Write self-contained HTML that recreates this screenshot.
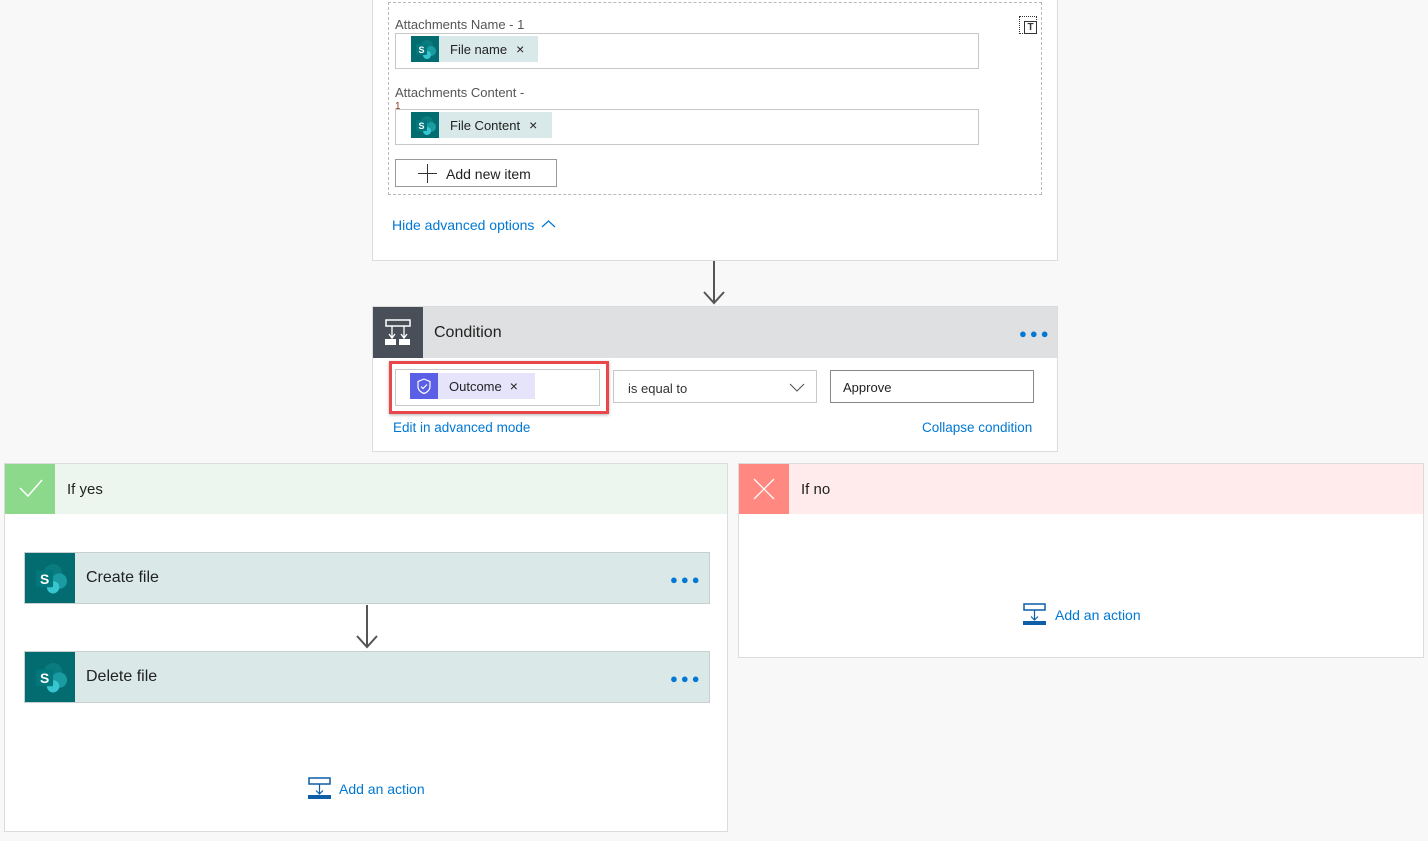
<!DOCTYPE html>
<html><head><meta charset="utf-8"><style>
*{box-sizing:border-box;margin:0;padding:0}
body{width:1428px;height:841px;background:#f8f8f8;position:relative;overflow:hidden;font-family:"Segoe UI","Liberation Sans",sans-serif;color:#333}
.a{position:absolute}
.card{background:#fff;border:1px solid #dcdcdc}
.lbl{font-size:13px;color:#555}
.inp{background:#fff;border:1px solid #c8c8c8}
.tok{background:#d9e8e8;font-size:13px;color:#222;display:flex;align-items:center}
.sp{background:#036c70;display:flex;align-items:center;justify-content:center}
.link{color:#0078d4;font-size:14px}
.dots{color:#0078d4;font-size:13px;letter-spacing:3px;line-height:10px}
</style></head><body>
<svg width="0" height="0" style="position:absolute"><defs>
<g id="spi"><circle cx="13" cy="8" r="6" fill="#0a7c80"/><circle cx="17" cy="13" r="5" fill="#1a9ba1"/><circle cx="13" cy="17" r="4" fill="#37c6d0"/><rect x="2" y="6" width="11" height="11" rx="1" fill="#03787c"/><text x="7.5" y="15" font-size="9" font-weight="bold" fill="#fff" text-anchor="middle" font-family="Liberation Sans">S</text></g>
<g id="add"><rect x="1" y="1" width="21" height="6" fill="#fff" stroke="#0f5fa8" stroke-width="1.5"/><line x1="11.5" y1="7" x2="11.5" y2="17" stroke="#0f5fa8" stroke-width="1.2"/><path d="M8 13.5l3.5 3.5 3.5-3.5" fill="none" stroke="#0f5fa8" stroke-width="1.2"/><rect x="0" y="18" width="23" height="4" fill="#0f5fa8"/></g>
</defs></svg>

<div class="a card" style="left:372px;top:-2px;width:686px;height:263px"></div>
<div class="a" style="left:388px;top:2px;width:654px;height:193px;border:1px dashed #b8b8b8"></div>
<div class="a" style="left:1019px;top:16px;width:18px;height:18px;border:1px dotted #333"></div>
<div class="a" style="left:1024px;top:21px;width:13px;height:13px;border:1px solid #333;font-size:10px;font-weight:bold;text-align:center;line-height:11px;background:#fff">T</div>
<div class="a lbl" style="left:395px;top:17px">Attachments Name - 1</div>
<div class="a inp" style="left:395px;top:33px;width:584px;height:36px"></div>
<div class="a tok" style="left:411px;top:36px;width:127px;height:26px"><div class="sp" style="width:28px;height:26px"><svg width="22" height="22"><use href="#spi"/></svg></div><span style="margin-left:11px">File name</span><span style="margin-left:9px;font-size:14px">×</span></div>
<div class="a lbl" style="left:395px;top:85px">Attachments Content -</div>
<div class="a" style="left:395px;top:101px;font-size:10px;color:#8a3b1f">1</div>
<div class="a inp" style="left:395px;top:109px;width:584px;height:36px"></div>
<div class="a tok" style="left:411px;top:112px;width:141px;height:26px"><div class="sp" style="width:28px;height:26px"><svg width="22" height="22"><use href="#spi"/></svg></div><span style="margin-left:11px">File Content</span><span style="margin-left:9px;font-size:14px">×</span></div>
<div class="a" style="left:395px;top:159px;width:162px;height:28px;border:1px solid #999;background:#fff;font-size:14px;color:#222;line-height:28px;padding-left:50px">Add new item</div>
<div class="a" style="left:418px;top:173px;width:19px;height:1px;background:#333"></div>
<div class="a" style="left:427px;top:164px;width:1px;height:19px;background:#333"></div>
<div class="a link" style="left:392px;top:217px">Hide advanced options</div>
<svg class="a" style="left:541px;top:219px" width="15" height="10"><path d="M1 8l6.5-6 6.5 6" fill="none" stroke="#0078d4" stroke-width="1.2"/></svg>

<div class="a" style="left:713px;top:261px;width:2px;height:42px;background:#555"></div>
<svg class="a" style="left:703px;top:288px" width="22" height="17"><path d="M1 4l10 11 10-11" fill="none" stroke="#555" stroke-width="2"/></svg>

<div class="a card" style="left:372px;top:306px;width:686px;height:146px"></div>
<div class="a" style="left:373px;top:307px;width:684px;height:51px;background:#dfe0e1"></div>
<div class="a" style="left:373px;top:307px;width:50px;height:51px;background:#484f58"></div>
<svg class="a" style="left:384px;top:318px" width="28" height="28"><rect x="2" y="2" width="24" height="6" fill="none" stroke="#fff" stroke-width="1.5"/><path d="M8 8v12M20 8v12M5 16l3 4 3-4M17 16l3 4 3-4" fill="none" stroke="#fff" stroke-width="1.3"/><rect x="1" y="21" width="11" height="6" fill="#fff"/><rect x="15" y="21" width="11" height="6" fill="#fff"/></svg>
<div class="a" style="left:434px;top:324px;font-size:16px;color:#222">Condition</div>
<div class="a dots" style="left:1019px;top:329px">●●●</div>
<div class="a" style="left:389px;top:361px;width:220px;height:53px;border:3px solid #e8484b;box-shadow:0 1px 3px rgba(0,0,0,.3)"></div>
<div class="a inp" style="left:395px;top:369px;width:205px;height:37px"></div>
<div class="a tok" style="left:410px;top:373px;width:125px;height:26px;background:#e5e4fb"><div style="width:28px;height:26px;background:#5b5fe5;display:flex;align-items:center;justify-content:center"><svg width="18" height="18"><path d="M9 2l6 2.5v5c0 3.5-3 6-6 7-3-1-6-3.5-6-7v-5z" fill="none" stroke="#fff" stroke-width="1.2"/><path d="M6 9.5l2 2 4-4" fill="none" stroke="#fff" stroke-width="1.2"/></svg></div><span style="margin-left:11px">Outcome</span><span style="margin-left:8px;font-size:14px">×</span></div>
<div class="a inp" style="left:613px;top:370px;width:204px;height:33px;font-size:13px;line-height:35px;padding-left:14px;color:#333">is equal to</div>
<svg class="a" style="left:789px;top:383px" width="16" height="10"><path d="M1 1l7 7 7-7" fill="none" stroke="#555" stroke-width="1.1"/></svg>
<div class="a" style="left:830px;top:370px;width:204px;height:33px;border:1px solid #888;background:#fff;font-size:13px;line-height:33px;padding-left:12px;color:#222">Approve</div>
<div class="a link" style="left:393px;top:420px;font-size:13.5px">Edit in advanced mode</div>
<div class="a link" style="left:922px;top:420px;font-size:13.5px">Collapse condition</div>

<div class="a card" style="left:4px;top:463px;width:724px;height:369px"></div>
<div class="a" style="left:5px;top:464px;width:722px;height:50px;background:#ecf6ee"></div>
<div class="a" style="left:5px;top:464px;width:50px;height:50px;background:#8cd98c"></div>
<svg class="a" style="left:18px;top:477px" width="26" height="22"><path d="M2 11l8 8L24 3" fill="none" stroke="#fff" stroke-width="1.5"/></svg>
<div class="a" style="left:67px;top:481px;font-size:15px;color:#222">If yes</div>

<div class="a" style="left:24px;top:552px;width:686px;height:52px;background:#dae8e8;border:1px solid #c8cfcf"></div>
<div class="a sp" style="left:25px;top:553px;width:50px;height:50px"><svg width="34" height="34" viewBox="0 0 22 22"><use href="#spi"/></svg></div>
<div class="a" style="left:86px;top:569px;font-size:16px;color:#222">Create file</div>
<div class="a dots" style="left:670px;top:575px">●●●</div>
<div class="a" style="left:366px;top:605px;width:2px;height:42px;background:#555"></div>
<svg class="a" style="left:356px;top:632px" width="22" height="17"><path d="M1 4l10 11 10-11" fill="none" stroke="#555" stroke-width="2"/></svg>
<div class="a" style="left:24px;top:651px;width:686px;height:52px;background:#dae8e8;border:1px solid #c8cfcf"></div>
<div class="a sp" style="left:25px;top:652px;width:50px;height:50px"><svg width="34" height="34" viewBox="0 0 22 22"><use href="#spi"/></svg></div>
<div class="a" style="left:86px;top:668px;font-size:16px;color:#222">Delete file</div>
<div class="a dots" style="left:670px;top:674px">●●●</div>
<svg class="a" style="left:308px;top:777px" width="24" height="23"><use href="#add"/></svg>
<div class="a link" style="left:339px;top:781px">Add an action</div>

<div class="a card" style="left:738px;top:463px;width:686px;height:195px"></div>
<div class="a" style="left:739px;top:464px;width:684px;height:50px;background:#ffebeb"></div>
<div class="a" style="left:739px;top:464px;width:50px;height:50px;background:#ff8981"></div>
<svg class="a" style="left:752px;top:477px" width="24" height="24"><path d="M2 2l20 20M22 2L2 22" stroke="#fff" stroke-width="1.3"/></svg>
<div class="a" style="left:801px;top:481px;font-size:15px;color:#222">If no</div>
<svg class="a" style="left:1023px;top:603px" width="24" height="23"><use href="#add"/></svg>
<div class="a link" style="left:1055px;top:607px">Add an action</div>
</body></html>
